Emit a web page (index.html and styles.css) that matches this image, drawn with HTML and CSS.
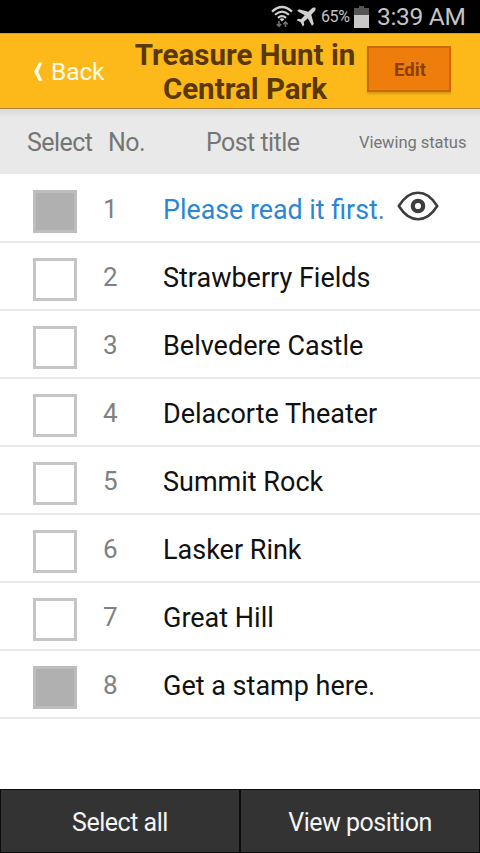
FILE: index.html
```html
<!DOCTYPE html>
<html lang="en">
<head>
<meta charset="utf-8">
<title>Treasure Hunt in Central Park</title>
<link rel="stylesheet" href="styles.css">
</head>
<body>
<div class="status">
  <svg class="wifi" width="22" height="24" viewBox="0 0 22 24" fill="none" stroke="#d0d0d0" stroke-width="2.200">
    <path d="M1 6.600Q11-2.600 21 6.600M4 9.800Q11 3.400 18 9.800M7 12.800Q11 9.400 15 12.800"/>
    <path d="M8.600 14.200Q11 12.400 13.400 14.200L11 16.600z" fill="#d0d0d0" stroke="none"/>
    <path d="M8 16v5.500M5.800 19L8 21.300l2.200-2.300M14.500 22v-5M12.300 19.200L14.500 17l2.200 2.200" stroke="#707070" stroke-width="1.600"/>
  </svg>
  <svg class="plane" width="20" height="20" viewBox="0 0 20 20" fill="#d0d0d0">
    <path d="M19.300.700C18 0 16.700.500 15.500 1.700L12.300 4.700 3 2.200 1.200 4 8.700 8.200 5 12.200 2 11.800.600 13.200 4.700 15.300 6.800 19.400 8.200 18 7.800 15 11.800 11.300 16 18.800 17.800 17 15.300 7.700 18.300 4.500C19.500 3.300 20 2 19.300.700Z"/>
  </svg>
  <span class="percent">65%</span>
  <svg class="battery" width="15" height="22" viewBox="0 0 15 22"><path d="M5 0h5v2h5v7H0V2h5z" fill="#555"/><path d="M0 9h15v13H0z" fill="#c8c8c8"/></svg>
  <span class="clock">3:39 AM</span>
</div>
<header class="bar">
  <div class="back">
    <svg width="10" height="20" viewBox="0 0 10 20"><path d="M6 .500H9.500L5.200 9.800 9.500 19H6L1 9.800Z" fill="#fffbe9"/></svg>
    <span>Back</span>
  </div>
  <h1 class="title">Treasure Hunt in<br>Central Park</h1>
  <button class="edit">Edit</button>
</header>
<div class="cols">
  <span class="c-select">Select</span><span class="c-no">No.</span><span class="c-title">Post title</span><span class="c-status">Viewing status</span>
</div>
<main class="list">
  <div class="row"><i class="box filled"></i><span class="num">1</span><span class="name read">Please read it first.</span>
    <svg class="eye" width="42" height="30" viewBox="0 0 42 30" fill="none" stroke="#3d3d3d"><path d="M1.800 15Q10 1.800 21 1.800T40.200 15Q32 28.200 21 28.200T1.800 15Z" stroke-width="2.600" stroke-linejoin="round"/><circle cx="21" cy="15" r="5.200" stroke-width="4.200"/></svg>
  </div>
  <div class="row"><i class="box"></i><span class="num">2</span><span class="name">Strawberry Fields</span></div>
  <div class="row"><i class="box"></i><span class="num">3</span><span class="name">Belvedere Castle</span></div>
  <div class="row"><i class="box"></i><span class="num">4</span><span class="name">Delacorte Theater</span></div>
  <div class="row"><i class="box"></i><span class="num">5</span><span class="name">Summit Rock</span></div>
  <div class="row"><i class="box"></i><span class="num">6</span><span class="name">Lasker Rink</span></div>
  <div class="row"><i class="box"></i><span class="num">7</span><span class="name">Great Hill</span></div>
  <div class="row"><i class="box filled"></i><span class="num">8</span><span class="name">Get a stamp here.</span></div>
</main>
<footer class="actions"><button>Select all</button><button>View position</button></footer>
</body>
</html>
```
FILE: styles.css
```css
* { box-sizing: border-box; }
body {
  margin: 0;
  height: 853px;
  display: flex;
  flex-direction: column;
  overflow: hidden;
  background: #fff;
  font-family: Roboto, "Liberation Sans", sans-serif;
  white-space: nowrap;
}
button { font-family: inherit; padding: 0; }
.status {
  height: 33px;
  flex: none;
  background: #000;
  color: #c4c4c4;
  display: flex;
  align-items: center;
  padding-left: 271px;
}
.wifi { margin-top: 1px; }
.plane { margin-left: 3px; }
.percent { font-size: 16px; letter-spacing: -0.4px; margin-left: 5px; width: 33px; }
.battery { margin-top: 1px; }
.clock { font-size: 24.500px; margin-left: 8px; letter-spacing: -0.3px; }
.bar {
  height: 76px;
  flex: none;
  background: #fdb91a;
  border-top: 1px solid #e0a010;
  border-bottom: 1px solid #a8873c;
  display: flex;
  padding-left: 33px;
}
.back {
  width: 97px;
  display: flex;
  gap: 8px;
  padding-top: 23px;
  color: #fffbe9;
  font-size: 24.500px;
  line-height: 29px;
  letter-spacing: -0.1px;
}
.back svg { margin-top: 5px; }
.title {
  margin: 4px 0 0;
  width: 230px;
  text-align: center;
  color: #5a3804;
  font-size: 29.500px;
  line-height: 34px;
  font-weight: 700;
}
.edit {
  margin: 12px 0 0 7px;
  width: 84px;
  height: 46px;
  background: #ee7d0c;
  border: 2px solid #c96a06;
  box-shadow: 0 2px 2px #dc9810;
  color: #8c3d08;
  font-size: 18.500px;
  font-weight: 700;
  padding: 1px 0 0 2px;
}
.cols {
  height: 65px;
  flex: none;
  display: flex;
  align-items: center;
  background: linear-gradient(#d8d8d8, #e9e9e9 9px);
  color: #757575;
  font-size: 25px;
  letter-spacing: -0.55px;
  padding: 1px 0 0 27px;
}
.c-select { width: 81px; }
.c-no { width: 98px; }
.c-title { width: 153px; }
.c-status { font-size: 16.500px; letter-spacing: -0.05px; }
.list { padding-top: 1px; }
.row {
  height: 68px;
  border-bottom: 2px solid #e9e9e9;
  display: flex;
  align-items: center;
  padding-left: 33px;
}
.box {
  width: 44px;
  height: 43px;
  border: 3px solid #c5c5c5;
  margin-top: 7px;
}
.filled { background: #b0b0b0; border-color: #bdbdbd; }
.num { width: 60px; margin-left: 26px; margin-top: 2px; color: #808080; font-size: 26px; }
.name { margin-top: 3px; color: #111; font-size: 27px; }
.read { width: 222px; color: #2b86d4; font-size: 26.800px; }
.eye { margin: -5px 0 0 12px; }
.actions { height: 64px; flex: none; margin-top: auto; display: flex; }
.actions button {
  flex: 1;
  background: #333;
  border: 1px solid #0c0c0c;
  color: #f4f4f4;
  font-size: 25px;
  letter-spacing: -0.48px;
  padding-top: 2px;
}
```
